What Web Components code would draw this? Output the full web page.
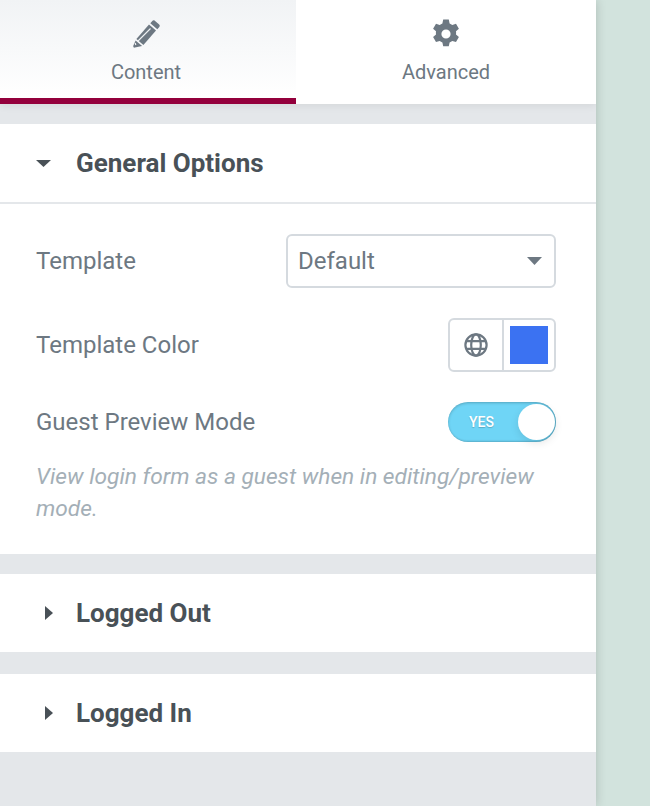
<!DOCTYPE html>
<html>
<head>
<meta charset="utf-8">
<style>
html, body { margin: 0; height: 100%; }
body { background: #d2e3dd; font-family: Roboto, "Liberation Sans", sans-serif; overflow: hidden; }
</style>
</head>
<body>
<editor-panel>
  <panel-tabs></panel-tabs>
  <panel-section title="General Options" open>
    <control-row label="Template">
      <select-box value="Default"></select-box>
    </control-row>
    <control-row label="Template Color" style="--row-top:30px">
      <color-box></color-box>
    </control-row>
    <control-row label="Guest Preview Mode" style="--row-top:30px">
      <toggle-box></toggle-box>
    </control-row>
    <control-note>View login form as a guest when in editing/preview mode.</control-note>
  </panel-section>
  <panel-section title="Logged Out"></panel-section>
  <panel-section title="Logged In" style="--section-top:22px"></panel-section>
</editor-panel>

<script>
class EditorPanel extends HTMLElement {
    constructor() {
        super();
        this.attachShadow({ mode: "open" });
    }

    connectedCallback() {
        this.shadowRoot.innerHTML = `
            <style>
                :host {
                    display: flex;
                    flex-direction: column;
                    width: 596px;
                    height: 806px;
                    overflow: hidden;
                    background: #e4e7ea;
                    box-shadow: 0 0 10px rgba(0, 0, 0, 0.18);
                }
            </style>
            <slot></slot>
        `;
    }
}

class PanelTabs extends HTMLElement {
    constructor() {
        super();
        this.attachShadow({ mode: "open" });
    }

    connectedCallback() {
        this.shadowRoot.innerHTML = `
            <style>
                :host {
                    display: grid;
                    grid-template-columns: 296px 300px;
                    height: 104px;
                    background: #fff;
                    box-shadow: 0 2px 8px rgba(0, 0, 0, 0.07);
                }
                .tab {
                    display: flex;
                    flex-direction: column;
                    align-items: center;
                    box-sizing: border-box;
                    color: #6d7882;
                    font-size: 20px;
                    line-height: 24px;
                }
                .tab svg { display: block; margin-top: 19px; width: 30px; height: 30px; fill: #6d7882; }
                .tab span { margin-top: 11px; }
                .active {
                    padding-right: 4px;
                    background: linear-gradient(to bottom, #f1f3f5, #fff);
                    border-bottom: 6px solid #93003c;
                }
            </style>
            <div class="tab active">
                <svg viewBox="0 0 30 30">
                    <path d="M23.2 1.200l5 4.300a1.800 1.800 0 0 1 .1 2.500l-2 2.300-7-6 2-2.300a1.800 1.800 0 0 1 1.900-.8z"/>
                    <path d="M18 5.400l7 6-12.600 14.600-7-6z"/>
                    <path d="M4.600 21.400l6.500 5.600-7.200 1.600a1.500 1.500 0 0 1-1.700-1.500z"/>
                    <path d="M19.500 9.500L6.500 22.500M4.200 24l.6 2" stroke="#eef0f2" stroke-width="1.200" fill="none"/>
                </svg>
                <span>Content</span>
            </div>
            <div class="tab">
                <svg viewBox="0 0 30 30"><path fill-rule="evenodd" d="M12.200 .6h5.600l.8 3.800a10.500 10.500 0 0 1 2.700 1.500l3.700-1.200 2.900 5-2.900 2.600a10.500 10.500 0 0 1 0 3.200l2.900 2.600-2.900 5-3.700-1.200a10.500 10.500 0 0 1-2.700 1.500l-.8 3.800h-5.600l-.8-3.800a10.500 10.500 0 0 1-2.700-1.500l-3.700 1.200-2.900-5 2.900-2.600a10.500 10.500 0 0 1 0-3.200l-2.900-2.600 2.900-5 3.700 1.200a10.500 10.500 0 0 1 2.700-1.500z M15 10.400a4.600 4.600 0 1 0 0 9.200a4.600 4.600 0 1 0 0-9.200z"/></svg>
                <span>Advanced</span>
            </div>
        `;
    }
}

class PanelSection extends HTMLElement {
    constructor() {
        super();
        this.attachShadow({ mode: "open" });
    }

    connectedCallback() {
        const open = this.hasAttribute("open");
        const arrow = open
            ? `<path d="M0 0h15l-7.500 7z"/>`
            : `<path d="M0 0l8 7-8 7z"/>`;
        const size = open
            ? `width="15" height="7" viewBox="0 0 15 7" style="margin-left:36px;margin-right:25px"`
            : `width="8" height="14" viewBox="0 0 8 14" style="margin-left:45px;margin-right:23px"`;
        this.shadowRoot.innerHTML = `
            <style>
                :host {
                    display: block;
                    margin-top: var(--section-top, 20px);
                    background: #fff;
                }
                .head {
                    display: flex;
                    align-items: center;
                    height: 78px;
                    color: #495157;
                    font-size: 26px;
                    font-weight: 700;
                }
                .head svg { fill: #495157; flex: none; }
                .body {
                    border-top: 2px solid #e4e7ea;
                    padding: 30px 40px 29px 36px;
                }
                .body[hidden] { display: none; }
            </style>
            <div class="head"><svg ${size}>${arrow}</svg><span>${this.getAttribute("title")}</span></div>
            <div class="body" ${open ? "" : "hidden"}><slot></slot></div>
        `;
    }
}

class ControlRow extends HTMLElement {
    constructor() {
        super();
        this.attachShadow({ mode: "open" });
    }

    connectedCallback() {
        this.shadowRoot.innerHTML = `
            <style>
                :host {
                    display: flex;
                    justify-content: space-between;
                    align-items: center;
                    margin-top: var(--row-top, 0);
                    color: #6d7882;
                    font-size: 24px;
                }
            </style>
            <span>${this.getAttribute("label")}</span>
            <slot></slot>
        `;
    }
}

class SelectBox extends HTMLElement {
    constructor() {
        super();
        this.attachShadow({ mode: "open" });
    }

    connectedCallback() {
        this.shadowRoot.innerHTML = `
            <style>
                :host {
                    display: flex;
                    justify-content: space-between;
                    align-items: center;
                    box-sizing: border-box;
                    width: 270px;
                    height: 54px;
                    padding: 0 12px 0 10px;
                    border: 2px solid #d5dadf;
                    border-radius: 6px;
                    color: #6d7882;
                    font-size: 24px;
                }
                svg { fill: #6d7882; margin-top: -1px; }
            </style>
            <span>${this.getAttribute("value")}</span>
            <svg width="15" height="8" viewBox="0 0 15 8"><path d="M0 0h15l-7.500 8z"/></svg>
        `;
    }
}

class ColorBox extends HTMLElement {
    constructor() {
        super();
        this.attachShadow({ mode: "open" });
    }

    connectedCallback() {
        this.shadowRoot.innerHTML = `
            <style>
                :host {
                    display: flex;
                    box-sizing: border-box;
                    width: 108px;
                    height: 54px;
                    border: 2px solid #d5dadf;
                    border-radius: 6px;
                }
                .globe {
                    display: flex;
                    align-items: center;
                    justify-content: center;
                    width: 52px;
                    border-right: 2px solid #d5dadf;
                }
                .swatch { flex: 1; display: flex; align-items: center; justify-content: center; }
                .swatch i { display: block; width: 38px; height: 38px; background: #3b72f2; }
                svg { fill: none; stroke: #6d7882; stroke-width: 2.200; }
            </style>
            <div class="globe">
                <svg width="24" height="24" viewBox="0 0 24 24">
                    <circle cx="12" cy="12" r="10.600"/>
                    <ellipse cx="12" cy="12" rx="4.800" ry="10.600"/>
                    <path d="M2 8.200h20M2 15.800h20"/>
                </svg>
            </div>
            <div class="swatch"><i></i></div>
        `;
    }
}

class ToggleBox extends HTMLElement {
    constructor() {
        super();
        this.attachShadow({ mode: "open" });
    }

    connectedCallback() {
        this.shadowRoot.innerHTML = `
            <style>
                :host {
                    display: flex;
                    align-items: center;
                    box-sizing: border-box;
                    position: relative;
                    width: 108px;
                    height: 40px;
                    padding-left: 21px;
                    border-radius: 20px;
                    background: #6fd5f6;
                    box-shadow: inset 0 1px 3px rgba(0, 0, 0, 0.22), inset -1px -1px 2px rgba(0, 0, 0, 0.16);
                    color: #fff;
                    font-size: 14px;
                    font-weight: 500;
                    text-shadow: 0 1px 1px rgba(0, 0, 0, 0.2);
                }
                .knob {
                    position: absolute;
                    top: 2px;
                    right: 1px;
                    width: 37px;
                    height: 36px;
                    border-radius: 50%;
                    background: #fff;
                    box-shadow: 0 3px 8px rgba(0, 0, 0, 0.1);
                }
            </style>
            <span>YES</span>
            <div class="knob"></div>
        `;
    }
}

class ControlNote extends HTMLElement {
    constructor() {
        super();
        this.attachShadow({ mode: "open" });
    }

    connectedCallback() {
        this.shadowRoot.innerHTML = `
            <style>
                :host {
                    display: block;
                    margin-top: 19px;
                    color: #a4afb7;
                    font-size: 22.700px;
                    font-style: italic;
                    line-height: 32px;
                }
            </style>
            <slot></slot>
        `;
    }
}

customElements.define("editor-panel", EditorPanel);
customElements.define("panel-tabs", PanelTabs);
customElements.define("panel-section", PanelSection);
customElements.define("control-row", ControlRow);
customElements.define("select-box", SelectBox);
customElements.define("color-box", ColorBox);
customElements.define("toggle-box", ToggleBox);
customElements.define("control-note", ControlNote);
</script>
</body>
</html>
